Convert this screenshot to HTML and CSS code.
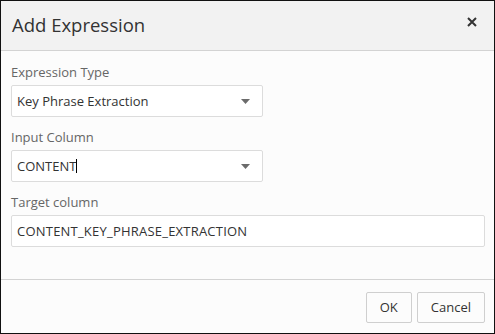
FILE: index.html
```html
<!DOCTYPE html>
<html>
<head>
<meta charset="utf-8">
<link rel="stylesheet" href="styles.css">
</head>
<body>
<div class="dialog">
  <div class="dialog-header">
    <h1 class="dialog-title">Add Expression</h1>
    <button class="close-btn" aria-label="Close">
      <svg width="10" height="10" viewBox="0 0 10 10"><path d="M1 1 L9 9 M9 1 L1 9" stroke="#333" stroke-width="2" stroke-linecap="butt"/></svg>
    </button>
  </div>
  <div class="dialog-body">
    <div class="field">
      <label class="field-label">Expression Type</label>
      <div class="select">
        <span class="select-value">Key Phrase Extraction</span>
        <svg class="select-arrow" width="9" height="5" viewBox="0 0 9 5"><polygon points="0,0 9,0 4.5,5" fill="#6b6b6b"/></svg>
      </div>
    </div>
    <div class="field">
      <label class="field-label">Input Column</label>
      <div class="select">
        <span class="select-value">CONTENT<span class="caret"></span></span>
        <svg class="select-arrow" width="9" height="5" viewBox="0 0 9 5"><polygon points="0,0 9,0 4.5,5" fill="#6b6b6b"/></svg>
      </div>
    </div>
    <div class="field field-last">
      <label class="field-label">Target column</label>
      <div class="text-input">CONTENT_KEY_PHRASE_EXTRACTION</div>
    </div>
  </div>
  <div class="dialog-footer">
    <button class="btn">OK</button>
    <button class="btn">Cancel</button>
  </div>
</div>
</body>
</html>
```

FILE: styles.css
```css
html, body {
  margin: 0;
  padding: 0;
  background: #ffffff;
}

.dialog {
  width: 495px;
  height: 334px;
  box-sizing: border-box;
  border: 1px solid #111;
  background: #fcfcfc;
  display: flex;
  flex-direction: column;
  font-family: "Open Sans", "Liberation Sans", sans-serif;
  color: #333;
}

.dialog-header {
  height: 50px;
  box-sizing: border-box;
  background: #f2f2f2;
  border-bottom: 1px solid #d3d3d3;
  display: flex;
  justify-content: space-between;
  align-items: center;
  padding: 0 17px 2px 11px;
  flex: none;
}

.dialog-title {
  margin: 0;
  font-size: 18.5px;
  font-weight: 400;
  line-height: 24px;
  color: #333;
}

.close-btn {
  border: none;
  background: none;
  padding: 0;
  width: 10px;
  height: 10px;
  align-self: flex-start;
  margin-top: 16px;
  display: block;
}

.close-btn svg {
  display: block;
}

.dialog-body {
  flex: 1;
  padding: 13px 9px 0 10px;
}

.field {
  margin-bottom: 12px;
}

.field-label {
  display: block;
  font-size: 13px;
  line-height: 16px;
  color: #666;
  margin-bottom: 5px;
}

.select {
  width: 252px;
  height: 32px;
  box-sizing: border-box;
  border: 1px solid #dcdcdc;
  border-radius: 2px;
  background: #fff;
  display: flex;
  align-items: center;
  justify-content: space-between;
  padding: 0 12px 0 5px;
}

.select-value,
.text-input {
  font-size: 13px;
  line-height: 30px;
  color: #333;
}

.caret {
  display: inline-block;
  width: 1px;
  height: 14px;
  background: #000;
  vertical-align: -2px;
}

.select-arrow {
  display: block;
  margin-top: 1px;
}

.text-input {
  height: 32px;
  box-sizing: border-box;
  border: 1px solid #dcdcdc;
  border-radius: 2px;
  background: #fff;
  padding: 0 5px;
  letter-spacing: 0.22px;
}

.dialog-footer {
  height: 54px;
  box-sizing: border-box;
  border-top: 1px solid #d3d3d3;
  display: flex;
  justify-content: flex-end;
  align-items: flex-start;
  gap: 5px;
  padding: 12px 9px 0 10px;
  flex: none;
}

.btn {
  height: 31px;
  box-sizing: border-box;
  border: 1px solid #cfcfcf;
  border-radius: 2px;
  background: #fcfcfc;
  font-family: "Open Sans", "Liberation Sans", sans-serif;
  font-size: 13px;
  color: #333;
  padding: 0 13px;
  line-height: 29px;
}
```
